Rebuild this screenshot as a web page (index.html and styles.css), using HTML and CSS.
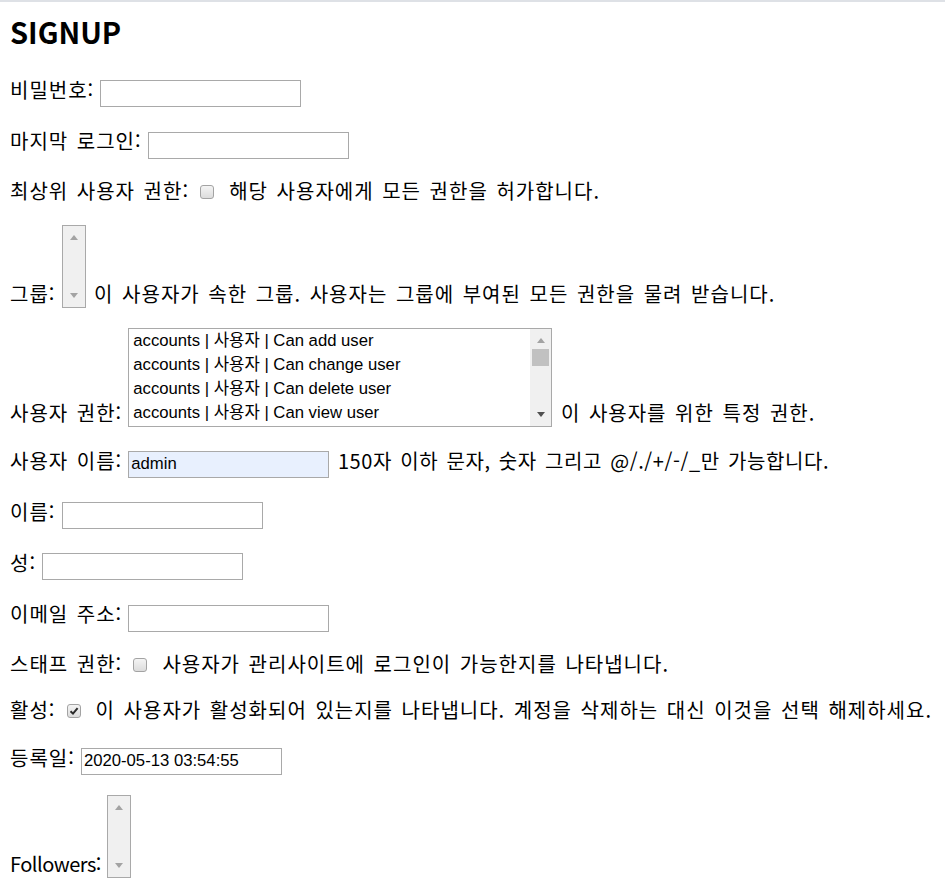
FILE: index.html
```html
<!DOCTYPE html>
<html lang="ko">
<head>
<meta charset="utf-8">
<title>SIGNUP</title>
<link rel="stylesheet" href="styles.css">
</head>
<body>
<h2 class="title">SIGNUP</h2>
<form class="form">
  <p class="row"><label class="label">비밀번호:</label> <input class="field" type="text"></p>
  <p class="row"><label class="label">마지막 로그인:</label> <input class="field" type="text"></p>
  <p class="row row--check"><label class="label">최상위 사용자 권한:</label> <span class="check"></span> <span class="help">해당 사용자에게 모든 권한을 허가합니다.</span></p>
  <p class="row"><label class="label">그룹:</label> <span class="listbox listbox--narrow"><span class="listbox-inner"><span class="sbar"><span class="arrow arrow--up"></span><span class="arrow arrow--down arrow--off"></span></span></span></span> <span class="help">이 사용자가 속한 그룹. 사용자는 그룹에 부여된 모든 권한을 물려 받습니다.</span></p>
  <p class="row"><label class="label">사용자 권한:</label> <span class="listbox listbox--wide"><span class="listbox-inner"><span class="options"><span class="option">accounts | 사용자 | Can add user</span><span class="option">accounts | 사용자 | Can change user</span><span class="option">accounts | 사용자 | Can delete user</span><span class="option">accounts | 사용자 | Can view user</span></span><span class="sbar"><span class="arrow arrow--up"></span><span class="thumb"></span><span class="arrow arrow--down"></span></span></span></span> <span class="help">이 사용자를 위한 특정 권한.</span></p>
  <p class="row"><label class="label">사용자 이름:</label> <input class="field field--filled" type="text" value="admin"> <span class="help help--mixed">150자 이하 문자, 숫자 그리고 @/./+/-/_만 가능합니다.</span></p>
  <p class="row"><label class="label">이름:</label> <input class="field" type="text"></p>
  <p class="row"><label class="label">성:</label> <input class="field" type="text"></p>
  <p class="row"><label class="label">이메일 주소:</label> <input class="field" type="text"></p>
  <p class="row row--check"><label class="label">스태프 권한:</label> <span class="check"></span> <span class="help">사용자가 관리사이트에 로그인이 가능한지를 나타냅니다.</span></p>
  <p class="row row--check"><label class="label">활성:</label> <span class="check"><svg class="tick" viewBox="0 0 10 10" width="10" height="10"><path d="M1.5 5.2 L4 7.6 L8.6 2.2" fill="none" stroke="#2b2b2b" stroke-width="2"/></svg></span> <span class="help">이 사용자가 활성화되어 있는지를 나타냅니다. 계정을 삭제하는 대신 이것을 선택 해제하세요.</span></p>
  <p class="row"><label class="label">등록일:</label> <input class="field" type="text" value="2020-05-13 03:54:55"></p>
  <p class="row"><label class="label label--latin">Followers:</label> <span class="listbox listbox--narrow"><span class="listbox-inner"><span class="sbar"><span class="arrow arrow--up"></span><span class="arrow arrow--down arrow--off"></span></span></span></span></p>
</form>
</body>
</html>
```

FILE: styles.css
```css
html {
  border-top: 2px solid #dee1e6;
  background: #fff;
}

body {
  margin: 0 10px;
  color: #000;
  font-family: "Noto Sans CJK KR", "Noto Sans", sans-serif;
  font-size: 20px;
  letter-spacing: 1px;
  word-spacing: 2px;
}

.title {
  margin: 8px 0 24px;
  font-size: 29px;
  font-weight: 700;
  letter-spacing: 0;
  word-spacing: 0;
}

.form {
  margin: 0;
}

.row {
  margin: 20px 0;
  line-height: 27px;
  white-space: nowrap;
}

.row--check {
  line-height: 24.5px;
}

.label {
  margin-right: -2.5px;
}

.label--latin {
  letter-spacing: -0.5px;
}

.help--mixed {
  letter-spacing: 0.6px;
}

.field {
  box-sizing: border-box;
  width: 201px;
  height: 27px;
  margin: 0;
  padding: 0 2px 1.5px;
  border: 1px solid #a9a9a9;
  background: #fff;
  color: #000;
  font-family: "Liberation Sans", Arial, sans-serif;
  font-size: 16.7px;
  letter-spacing: 0;
  word-spacing: 0;
  vertical-align: baseline;
  outline: none;
}

.field--filled {
  background: #e8f0fe;
}

.check {
  box-sizing: border-box;
  display: inline-block;
  overflow: hidden;
  width: 14px;
  height: 14px;
  margin: 0 6.5px 6px 5px;
  border: 1px solid #a3a3a3;
  border-radius: 3px;
  background: linear-gradient(#f4f4f4, #dcdcdc);
  vertical-align: -6px;
}

.tick {
  display: block;
  margin: 1px auto 0;
}

.listbox {
  box-sizing: border-box;
  display: inline-block;
  overflow: hidden;
  border: 1px solid #a9a9a9;
  background: #fff;
  vertical-align: -6px;
}

.listbox-inner {
  display: flex;
  height: 100%;
}

.listbox--narrow {
  width: 24px;
  height: 83px;
}

.listbox--wide {
  width: 424px;
  height: 99px;
}

.options {
  flex: 1;
  display: flex;
  flex-direction: column;
  padding-left: 4px;
  font-family: "Liberation Sans", Arial, "Noto Sans CJK KR", sans-serif;
  font-size: 16.7px;
  letter-spacing: 0;
  word-spacing: 0;
}

.option {
  height: 24.3px;
  line-height: 24.3px;
}

.sbar {
  display: flex;
  flex-direction: column;
  align-items: center;
  width: 21px;
  padding: 9px 0;
  box-sizing: border-box;
  background: #f0f0f0;
}

.listbox--narrow .sbar {
  width: 100%;
}

.arrow {
  width: 0;
  height: 0;
  border-left: 4.5px solid transparent;
  border-right: 4.5px solid transparent;
}

.arrow--up {
  border-bottom: 5px solid #a3a3a3;
}

.arrow--down {
  margin-top: auto;
  border-top: 5px solid #505050;
}

.arrow--off {
  border-top-color: #a3a3a3;
}

.thumb {
  width: 17px;
  height: 17px;
  margin-top: 6px;
  background: #c1c1c1;
}
```
